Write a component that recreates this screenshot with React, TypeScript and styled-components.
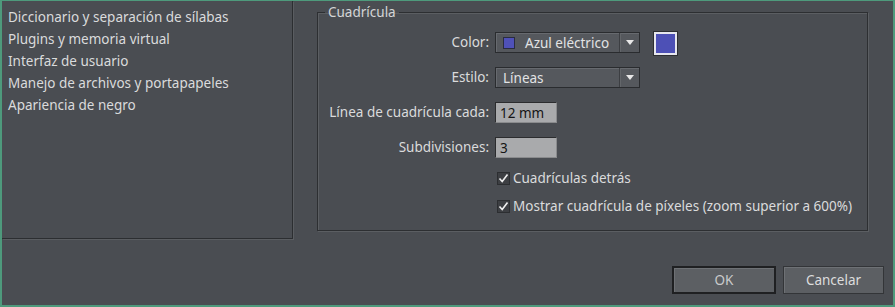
import React from "react";
import styled, { createGlobalStyle } from "styled-components";

const Global = createGlobalStyle`
  html, body { margin: 0; padding: 0; background: #4a4d52; }
  body { font-family: "Noto Sans", "Liberation Sans", sans-serif; }
  * { box-sizing: border-box; }
`;

const Window = styled.div`
  width: 895px;
  height: 307px;
  border: 2px solid #4e9a7c;
  border-top-width: 1px;
  background: #4a4d52;
  display: flex;
  flex-direction: column;
  color: #dadbdc;
  font-size: 13.5px;
`;

const Top = styled.div`
  display: flex;
  align-items: flex-start;
  height: 238px;
`;

const List = styled.ul`
  list-style: none;
  margin: 0;
  padding: 5px 0 0 6px;
  width: 291px;
  height: 238px;
  border-right: 1px solid #2c2e31;
  border-bottom: 1px solid #2c2e31;
  box-shadow: 1px 1px 0 #5a5d61;
`;

const Item = styled.li`
  height: 22px;
  line-height: 22px;
  white-space: nowrap;
`;

const Group = styled.fieldset`
  margin: 2px 0 0 24px;
  width: 551px;
  height: 228px;
  padding: 11px 0 0 0;
  border: 1px solid #2d2f32;
  box-shadow: inset 1px 1px 0 #5b5e62, 1px 1px 0 #5b5e62;
`;

const Legend = styled.legend`
  padding: 0 3px;
  margin-left: 7px;
  line-height: 18px;
  color: #d4d5d6;
`;

const Form = styled.div`
  display: grid;
  grid-template-columns: 171px auto;
  column-gap: 6px;
  align-items: start;
`;

const Label = styled.label`
  text-align: right;
  white-space: nowrap;
  height: 21px;
  line-height: 21px;
`;

const Cell = styled.div<{ $h?: number }>`
  height: ${(p) => p.$h ?? 35}px;
  display: flex;
  align-items: flex-start;
  gap: 14px;
`;

const Select = styled.div`
  width: 145px;
  height: 21px;
  display: flex;
  align-items: center;
  background: #55585d;
  border: 1px solid #2a2c2f;
  box-shadow: inset 1px 1px 0 #676a6f;
  padding-left: 7px;
  color: #e2e3e4;
`;

const SelectText = styled.span`
  flex: 1;
  display: flex;
  align-items: center;
  gap: 10px;
  white-space: nowrap;
`;

const Arrow = styled.span`
  width: 20px;
  height: 19px;
  border-left: 1px solid #3c3e42;
  box-shadow: inset 1px 0 0 #63666a;
  display: flex;
  align-items: center;
  justify-content: center;
`;

const Tri = styled.span`
  width: 0;
  height: 0;
  border-left: 4px solid transparent;
  border-right: 4px solid transparent;
  border-top: 5px solid #e8e8e8;
`;

const MiniSwatch = styled.span`
  width: 12px;
  height: 12px;
  background: #4f51b8;
  border: 1px solid #2a2c40;
`;

const BigSwatch = styled.span`
  width: 23px;
  height: 23px;
  background: #4d50b6;
  border: 2px solid #e6e6ee;
  outline: 1px solid #2c2e31;
`;

const Input = styled.input`
  width: 62px;
  height: 21px;
  background: #a9aaac;
  border: 1px solid #2b2c2e;
  border-right-color: #8a8b8d;
  border-bottom-color: #8a8b8d;
  padding: 0 0 0 4px;
  font: inherit;
  color: #151515;
  outline: none;
`;

const Check = styled.label`
  display: flex;
  align-items: center;
  gap: 3px;
  height: 28px;
  white-space: nowrap;
  margin-left: 2px;
`;

const Box = styled.span`
  width: 13px;
  height: 13px;
  background: #3d3f43;
  border: 1px solid #2c2e31;
  display: flex;
  align-items: center;
  justify-content: center;
`;

const Footer = styled.div`
  flex: 1;
  display: flex;
  justify-content: flex-end;
  align-items: flex-start;
  gap: 7px;
  padding: 27px 9px 0 0;
`;

const Button = styled.button<{ $default?: boolean; $w: number }>`
  width: ${(p) => p.$w}px;
  height: 28px;
  background: #5c5f63;
  border: ${(p) => (p.$default ? "2px solid #1f2022" : "1px solid #333538")};
  box-shadow: inset 1px 1px 0 #6e7175;
  color: ${(p) => (p.$default ? "#c9cacb" : "#dcdddd")};
  font: inherit;
  font-size: 13.5px;
  padding: 0;
`;

const CheckMark = () => (
  <svg width="11" height="11" viewBox="0 0 11 11">
    <path d="M1.5 5.5 L4.2 8.5 L9.5 1.5" fill="none" stroke="#f0f0f0" strokeWidth="1.6" />
  </svg>
);

export default function App() {
  return (
    <>
      <Global />
      <Window>
        <Top>
          <List>
            <Item>Diccionario y separación de sílabas</Item>
            <Item>Plugins y memoria virtual</Item>
            <Item>Interfaz de usuario</Item>
            <Item>Manejo de archivos y portapapeles</Item>
            <Item>Apariencia de negro</Item>
          </List>
          <Group>
            <Legend>Cuadrícula</Legend>
            <Form>
              <Label>Color:</Label>
              <Cell>
                <Select>
                  <SelectText>
                    <MiniSwatch />
                    Azul eléctrico
                  </SelectText>
                  <Arrow>
                    <Tri />
                  </Arrow>
                </Select>
                <BigSwatch />
              </Cell>
              <Label>Estilo:</Label>
              <Cell>
                <Select>
                  <SelectText>Líneas</SelectText>
                  <Arrow>
                    <Tri />
                  </Arrow>
                </Select>
              </Cell>
              <Label>Línea de cuadrícula cada:</Label>
              <Cell>
                <Input defaultValue="12 mm" />
              </Cell>
              <Label>Subdivisiones:</Label>
              <Cell $h={27}>
                <Input defaultValue="3" />
              </Cell>
              <span />
              <Check>
                <Box>
                  <CheckMark />
                </Box>
                Cuadrículas detrás
              </Check>
              <span />
              <Check>
                <Box>
                  <CheckMark />
                </Box>
                Mostrar cuadrícula de píxeles (zoom superior a 600%)
              </Check>
            </Form>
          </Group>
        </Top>
        <Footer>
          <Button $default $w={104}>OK</Button>
          <Button $w={101}>Cancelar</Button>
        </Footer>
      </Window>
    </>
  );
}
